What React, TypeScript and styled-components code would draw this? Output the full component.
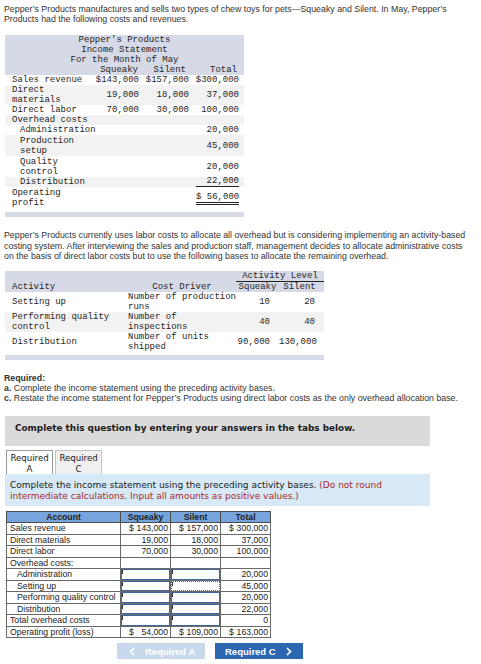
import React from "react";
import styled, { createGlobalStyle } from "styled-components";

const Global = createGlobalStyle`
  html, body { margin: 0; padding: 0; background: #ffffff; }
  body { font-family: "Liberation Sans", Arial, sans-serif; color: #333; }
`;

const Page = styled.div`
  width: 481px;
  box-sizing: border-box;
  padding: 4px 4px 0 4px;
`;

const Para = styled.p<{ $mt?: number; $lh?: number }>`
  margin: ${(p) => p.$mt ?? 0}px 0 0 0;
  font-family: "Liberation Sans", Arial, sans-serif;
  font-size: 8.8px;
  line-height: ${(p) => p.$lh ?? 10}px;
  color: #333;
  white-space: nowrap;
`;

/* ---------- monospace exhibit tables ---------- */
const ExhibitWrap = styled.div<{ $mt: number; $w: number }>`
  width: ${(p) => p.$w}px;
  margin: ${(p) => p.$mt}px 0 0 1px;
`;

const Exhibit = styled.table`
  border-collapse: collapse;
  table-layout: fixed;
  width: 100%;
  font-family: "Liberation Mono", "Courier New", monospace;
  font-size: 9px;
  line-height: 10px;
  color: #262626;
  white-space: nowrap;
`;

const ExhibitFoot = styled.div`
  height: 5px;
  margin-top: 3px;
  background: #d6d9e6;
`;

const ExRow = styled.tr<{ $bg?: "head" | "alt" | "plain" }>`
  background: ${(p) =>
    p.$bg === "head" ? "#d6d9e6" : p.$bg === "alt" ? "#f2f2f2" : "#ffffff"};
`;

const ExCell = styled.td<{
  $align?: "left" | "center" | "right";
  $pl?: number;
  $pr?: number;
  $pb?: number;
  $h?: number;
}>`
  padding: 0 ${(p) => p.$pr ?? 0}px ${(p) => p.$pb ?? 0}px ${(p) => p.$pl ?? 0}px;
  text-align: ${(p) => p.$align ?? "left"};
  vertical-align: middle;
  height: ${(p) => (p.$h !== undefined ? `${p.$h}px` : "auto")};
`;

const Under = styled.span<{ $double?: boolean }>`
  display: block;
  margin-left: 6px;
  border-bottom: ${(p) => (p.$double ? "3px double #222" : "1px solid #222")};
  line-height: ${(p) => (p.$double ? 10 : 9)}px;
`;

const LevelCell = styled.td`
  padding: 0;
  text-align: center;
  border-bottom: 1px solid #222;
  height: 10px;
`;

/* ---------- required text ---------- */
const Bold = styled.b`
  font-weight: bold;
`;

/* ---------- question area ---------- */
const Notice = styled.div`
  margin: 13px 0 0 1px;
  width: 425px;
  height: 30px;
  box-sizing: border-box;
  padding: 7px 0 0 10px;
  background: #dadada;
  font-family: "DejaVu Sans", Verdana, sans-serif;
  font-weight: bold;
  font-size: 8.9px;
  line-height: 11px;
  color: #1a1a1a;
  white-space: nowrap;
`;

const Tabs = styled.div`
  display: flex;
  gap: 2px;
  margin: 4px 0 0 2px;
`;

const Tab = styled.div<{ $active?: boolean }>`
  width: 47px;
  height: 24px;
  box-sizing: border-box;
  padding-top: 2px;
  border: 1px solid ${(p) => (p.$active ? "#9a9a9a" : "#c4c4c4")};
  border-bottom: none;
  background: ${(p) => (p.$active ? "#ffffff" : "#f0f0f0")};
  font-family: "DejaVu Sans", Verdana, sans-serif;
  font-size: 8.6px;
  line-height: 11px;
  text-align: center;
  color: #222;
`;

const Panel = styled.div`
  margin-left: 1px;
  width: 425px;
  height: 32px;
  box-sizing: border-box;
  padding: 6px 0 0 5px;
  background: #d7e9f7;
  font-family: "DejaVu Sans", Verdana, sans-serif;
  font-size: 9px;
  line-height: 11.3px;
  color: #1a1a1a;
  white-space: nowrap;
`;

const Warn = styled.span`
  color: #a8282a;
`;

/* ---------- answer table ---------- */
const Answer = styled.table`
  border-collapse: collapse;
  table-layout: fixed;
  width: 264px;
  margin: 5px 0 0 2px;
  font-family: "Liberation Sans", Arial, sans-serif;
  font-size: 8.7px;
  line-height: 10px;
  color: #222;
  white-space: nowrap;
`;

const HeadCell = styled.th`
  background: #76a5de;
  border: 1px solid #4d4d4d;
  padding: 0;
  height: 9.5px;
  font-weight: bold;
  text-align: center;
  color: #1f1f1f;
`;

const Cell = styled.td<{ $indent?: boolean; $right?: boolean; $input?: boolean }>`
  border: 1px solid #6a6a6a;
  height: 10.5px;
  padding: ${(p) => (p.$input ? "0" : `0 2px 0 ${p.$indent ? 10 : 3}px`)};
  text-align: ${(p) => (p.$right ? "right" : "left")};
  vertical-align: middle;
`;

const Money = styled.div`
  display: flex;
  justify-content: space-between;
  padding-left: 5px;
`;

const InputBox = styled.div<{ $dotted?: boolean }>`
  position: relative;
  height: 10.5px;
  box-sizing: border-box;
  background: #ffffff;
  border: 1px ${(p) => (p.$dotted ? "dotted" : "solid")} #3d679e;
`;

const Caret = styled.span`
  position: absolute;
  left: 0;
  top: 0;
  width: 1px;
  height: 4px;
  background: #333;
`;

/* ---------- nav buttons ---------- */
const Nav = styled.div`
  display: flex;
  justify-content: center;
  gap: 10px;
  width: 410px;
  margin: 5px 0 0 1px;
`;

const NavButton = styled.div<{ $enabled?: boolean }>`
  display: flex;
  align-items: center;
  gap: 10px;
  box-sizing: border-box;
  width: 88px;
  height: 16px;
  padding: ${(p) => (p.$enabled ? "0 0 0 10px" : "0 0 0 12px")};
  background: ${(p) => (p.$enabled ? "#2e67b1" : "#c8d8ed")};
  color: #ffffff;
  font-family: "Liberation Sans", Arial, sans-serif;
  font-weight: bold;
  font-size: 9.5px;
`;

const Chevron = ({ dir }: { dir: "left" | "right" }) => (
  <svg width="6" height="9" viewBox="0 0 6 9">
    <polyline
      points={dir === "left" ? "5,1 1.5,4.5 5,8" : "1,1 4.5,4.5 1,8"}
      fill="none"
      stroke="#ffffff"
      strokeWidth="1.6"
    />
  </svg>
);

const incomeRows: {
  label: React.ReactNode;
  indent?: boolean;
  vals: string[];
  bg: "alt" | "plain";
  h: number;
  under?: "single" | "double";
}[] = [
  { label: "Sales revenue", vals: ["$143,000", "$157,000", "$300,000"], bg: "plain", h: 10 },
  { label: <>Direct<br />materials</>, vals: ["19,000", "18,000", "37,000"], bg: "alt", h: 20 },
  { label: "Direct labor", vals: ["70,000", "30,000", "100,000"], bg: "plain", h: 10 },
  { label: "Overhead costs", vals: ["", "", ""], bg: "alt", h: 10 },
  { label: "Administration", indent: true, vals: ["", "", "20,000"], bg: "plain", h: 10 },
  { label: <>Production<br />setup</>, indent: true, vals: ["", "", "45,000"], bg: "alt", h: 21 },
  { label: <>Quality<br />control</>, indent: true, vals: ["", "", "20,000"], bg: "plain", h: 21 },
  { label: "Distribution", indent: true, vals: ["", "", "22,000"], bg: "alt", h: 10, under: "single" },
  { label: <>Operating<br />profit</>, vals: ["", "", "$ 56,000"], bg: "plain", h: 21, under: "double" },
];

const activityRows = [
  { a: "Setting up", d: <>Number of production<br />runs</>, s: "10", t: "20", bg: "plain" as const },
  { a: <>Performing quality<br />control</>, d: <>Number of<br />inspections</>, s: "40", t: "40", bg: "alt" as const },
  { a: "Distribution", d: <>Number of units<br />shipped</>, s: "90,000", t: "130,000", bg: "plain" as const },
];

type Val = { money?: [string, string]; text?: string; input?: boolean; dotted?: boolean };
const answerRows: { label: string; indent?: boolean; cells: Val[] }[] = [
  { label: "Sales revenue", cells: [{ money: ["$", "143,000"] }, { money: ["$", "157,000"] }, { money: ["$", "300,000"] }] },
  { label: "Direct materials", cells: [{ text: "19,000" }, { text: "18,000" }, { text: "37,000" }] },
  { label: "Direct labor", cells: [{ text: "70,000" }, { text: "30,000" }, { text: "100,000" }] },
  { label: "Overhead costs:", cells: [{ text: "" }, { text: "" }, { text: "" }] },
  { label: "Administration", indent: true, cells: [{ input: true }, { input: true }, { text: "20,000" }] },
  { label: "Setting up", indent: true, cells: [{ input: true }, { input: true, dotted: true }, { text: "45,000" }] },
  { label: "Performing quality control", indent: true, cells: [{ input: true }, { input: true }, { text: "20,000" }] },
  { label: "Distribution", indent: true, cells: [{ input: true }, { input: true }, { text: "22,000" }] },
  { label: "Total overhead costs", cells: [{ input: true }, { input: true }, { text: "0" }] },
  { label: "Operating profit (loss)", cells: [{ money: ["$", "54,000"] }, { money: ["$", "109,000"] }, { money: ["$", "163,000"] }] },
];

export default function App() {
  return (
    <>
      <Global />
      <Page>
        <Para>
          Pepper’s Products manufactures and sells two types of chew toys for pets—Squeaky and Silent. In May, Pepper’s
          <br />
          Products had the following costs and revenues.
        </Para>

        <ExhibitWrap $mt={11} $w={239}>
          <Exhibit>
            <colgroup>
              <col style={{ width: 90 }} />
              <col style={{ width: 45 }} />
              <col style={{ width: 50 }} />
              <col style={{ width: 54 }} />
            </colgroup>
            <tbody>
              <ExRow $bg="head"><ExCell colSpan={4} $align="center" $h={10}>Pepper's Products</ExCell></ExRow>
              <ExRow $bg="head"><ExCell colSpan={4} $align="center" $h={10}>Income Statement</ExCell></ExRow>
              <ExRow $bg="head"><ExCell colSpan={4} $align="center" $h={10}>For the Month of May</ExCell></ExRow>
              <ExRow $bg="head">
                <ExCell $h={10} />
                <ExCell $align="right" $pr={2}>Squeaky</ExCell>
                <ExCell $align="right" $pr={4}>Silent</ExCell>
                <ExCell $align="right" $pr={7}>Total</ExCell>
              </ExRow>
              {incomeRows.map((r, i) => (
                <ExRow key={i} $bg={r.bg}>
                  <ExCell $pl={r.indent ? 15 : 7} $h={r.h} $pb={r.under === "double" ? 1 : 0}>{r.label}</ExCell>
                  <ExCell $align="right" $pr={1}>{r.vals[0]}</ExCell>
                  <ExCell $align="right" $pr={1}>{r.vals[1]}</ExCell>
                  <ExCell $align="right" $pr={5}>
                    {r.under ? <Under $double={r.under === "double"}>{r.vals[2]}</Under> : r.vals[2]}
                  </ExCell>
                </ExRow>
              ))}
            </tbody>
          </Exhibit>
          <ExhibitFoot />
        </ExhibitWrap>

        <Para $mt={13} $lh={10.5}>
          Pepper’s Products currently uses labor costs to allocate all overhead but is considering implementing an activity-based
          <br />
          costing system. After interviewing the sales and production staff, management decides to allocate administrative costs
          <br />
          on the basis of direct labor costs but to use the following bases to allocate the remaining overhead.
        </Para>

        <ExhibitWrap $mt={9} $w={319}>
          <Exhibit>
            <colgroup>
              <col style={{ width: 123 }} />
              <col style={{ width: 108 }} />
              <col style={{ width: 43 }} />
              <col style={{ width: 45 }} />
            </colgroup>
            <tbody>
              <ExRow $bg="head">
                <ExCell colSpan={2} $h={10} />
                <LevelCell colSpan={2}>Activity Level</LevelCell>
              </ExRow>
              <ExRow $bg="head">
                <ExCell $pl={7} $h={11}>Activity</ExCell>
                <ExCell $align="center">Cost Driver</ExCell>
                <ExCell $align="center">Squeaky</ExCell>
                <ExCell $align="center" $pr={4}>Silent</ExCell>
              </ExRow>
              {activityRows.map((r, i) => (
                <ExRow key={i} $bg={r.bg}>
                  <ExCell $pl={7} $h={20}>{r.a}</ExCell>
                  <ExCell>{r.d}</ExCell>
                  <ExCell $align="right" $pr={9}>{r.s}</ExCell>
                  <ExCell $align="right" $pr={9}>{r.t}</ExCell>
                </ExRow>
              ))}
            </tbody>
          </Exhibit>
          <ExhibitFoot />
        </ExhibitWrap>

        <Para $mt={13}>
          <Bold>Required:</Bold>
          <br />
          <Bold>a.</Bold> Complete the income statement using the preceding activity bases.
          <br />
          <Bold>c.</Bold> Restate the income statement for Pepper’s Products using direct labor costs as the only overhead allocation base.
        </Para>

        <Notice>Complete this question by entering your answers in the tabs below.</Notice>

        <Tabs>
          <Tab $active>Required<br />A</Tab>
          <Tab>Required<br />C</Tab>
        </Tabs>

        <Panel>
          Complete the income statement using the preceding activity bases. <Warn>(Do not round</Warn>
          <br />
          <Warn>intermediate calculations. Input all amounts as positive values.)</Warn>
        </Panel>

        <Answer>
          <colgroup>
            <col style={{ width: 114 }} />
            <col style={{ width: 50 }} />
            <col style={{ width: 50 }} />
            <col style={{ width: 50 }} />
          </colgroup>
          <thead>
            <tr>
              <HeadCell>Account</HeadCell>
              <HeadCell>Squeaky</HeadCell>
              <HeadCell>Silent</HeadCell>
              <HeadCell>Total</HeadCell>
            </tr>
          </thead>
          <tbody>
            {answerRows.map((r, i) => (
              <tr key={i}>
                <Cell $indent={r.indent}>{r.label}</Cell>
                {r.cells.map((c, j) =>
                  c.input ? (
                    <Cell key={j} $input>
                      <InputBox $dotted={c.dotted}>
                        <Caret />
                      </InputBox>
                    </Cell>
                  ) : (
                    <Cell key={j} $right>
                      {c.money ? (
                        <Money>
                          <span>{c.money[0]}</span>
                          <span>{c.money[1]}</span>
                        </Money>
                      ) : (
                        c.text
                      )}
                    </Cell>
                  )
                )}
              </tr>
            ))}
          </tbody>
        </Answer>

        <Nav>
          <NavButton>
            <Chevron dir="left" />
            Required A
          </NavButton>
          <NavButton $enabled>
            Required C
            <Chevron dir="right" />
          </NavButton>
        </Nav>
      </Page>
    </>
  );
}
